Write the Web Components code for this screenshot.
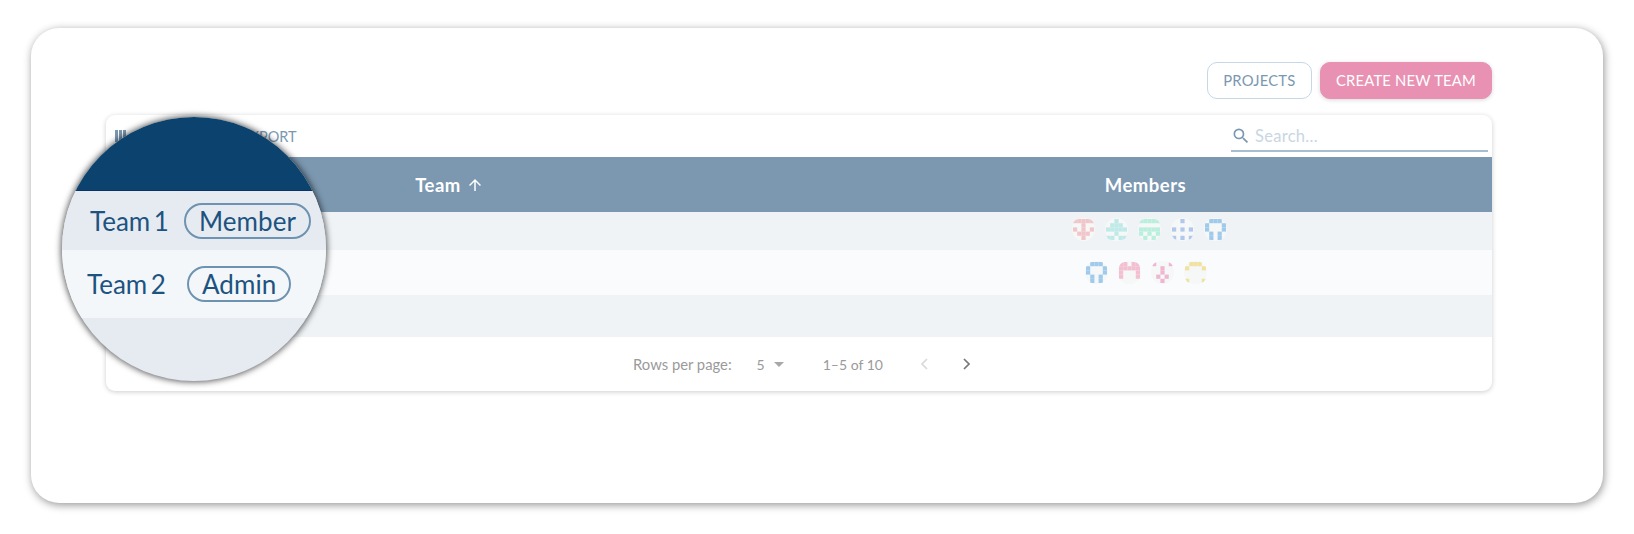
<!DOCTYPE html>
<html>
<head>
<meta charset="utf-8">
<title>Teams</title>
<style>
  html, body { margin: 0; background: #fff; }
  body { box-sizing: border-box; height: 534px; padding: 28px 31px 0; font-family: "Lato", "Liberation Sans", sans-serif; overflow: hidden; }
</style>
</head>
<body>
<team-panel>
  <div slot="actions" style="display:flex">
    <team-button>PROJECTS</team-button>
    <team-button primary>CREATE NEW TEAM</team-button>
  </div>
  <team-card>
    <team-toolbar></team-toolbar>
    <team-head></team-head>
    <team-row tone="dark" height="38" style="--shift:7px;--lift:4px">
      <team-identicon color="#f0c6cb" cells="11111 00100 10101 01110 00100"></team-identicon>
      <team-identicon color="#bfeae8" cells="00100 01110 11111 00100 11011"></team-identicon>
      <team-identicon color="#b9efdc" cells="11111 00000 11111 10101 01010"></team-identicon>
      <team-identicon color="#b0c8ee" cells="00100 00000 10101 00000 10101"></team-identicon>
      <team-identicon color="#9fcaec" cells="01110 10001 10001 01010 01010"></team-identicon>
    </team-row>
    <team-row tone="light" height="45">
      <team-identicon color="#9fcaec" cells="01110 10001 10001 01010 01010"></team-identicon>
      <team-identicon color="#f3c0d2" cells="11011 11111 10001 10001 00000"></team-identicon>
      <team-identicon color="#eeb6d0" cells="10001 00100 00100 01010 00100"></team-identicon>
      <team-identicon color="#f0e2a0" cells="01110 10001 00000 00000 10001"></team-identicon>
    </team-row>
    <team-row tone="dark" height="42"></team-row>
    <team-pagination></team-pagination>
  </team-card>
  <team-lens slot="overlay">
    <lens-row tone="mid" style="--pad:28px;--rowh:59px;--gap:15px">
      <span>Team 1</span><lens-pill>Member</lens-pill>
    </lens-row>
    <lens-row tone="pale" style="--pad:25px;--rowh:68px;--gap:21px">
      <span>Team 2</span><lens-pill>Admin</lens-pill>
    </lens-row>
  </team-lens>
</team-panel>

<script>
class TeamPanel extends HTMLElement {
    constructor() {
        super();
        this.attachShadow({mode: "open"});
        this.shadowRoot.innerHTML = `
        <style>
            :host {
                display: block;
                position: relative;
                box-sizing: border-box;
                width: 1572px;
                height: 475px;
                padding: 34px 111px 0 75px;
                background: #fff;
                border-radius: 28px;
                box-shadow: 1px 2px 8px rgba(0, 0, 0, .42);
            }
            .actions { display: flex; justify-content: flex-end; margin-bottom: 16px; }
        </style>
        <div class="actions"><slot name="actions"></slot></div>
        <slot></slot>
        <slot name="overlay"></slot>
        `;
    }
}

class TeamButton extends HTMLElement {
    constructor() {
        super();
        this.attachShadow({mode: "open"});
        this.shadowRoot.innerHTML = `
        <style>
            :host {
                display: inline-flex;
                align-items: center;
                justify-content: center;
                box-sizing: border-box;
                height: 37px;
                margin-left: 8px;
                padding: 0 15.5px 2px;
                border: 1px solid #c6d7e5;
                border-radius: 10px;
                color: #7b98b0;
                font-size: 14.8px;
                letter-spacing: .2px;
            }
            :host([primary]) {
                padding: 0 15px 2px;
                border-color: #e891b3;
                background: #e891b3;
                color: #fff;
                box-shadow: 0 1px 4px rgba(0, 0, 0, .16);
            }
        </style>
        <slot></slot>
        `;
    }
}

class TeamCard extends HTMLElement {
    constructor() {
        super();
        this.attachShadow({mode: "open"});
        this.shadowRoot.innerHTML = `
        <style>
            :host {
                display: block;
                width: 1386px;
                background: #fff;
                border-radius: 9px;
                box-shadow: 0 1px 5px rgba(0, 0, 0, .2);
                overflow: hidden;
            }
        </style>
        <slot></slot>
        `;
    }
}

class TeamToolbar extends HTMLElement {
    constructor() {
        super();
        this.attachShadow({mode: "open"});
        this.shadowRoot.innerHTML = `
        <style>
            :host {
                display: flex;
                align-items: center;
                height: 42px;
                padding: 0 4px 0 8px;
                color: #7b98b0;
                font-size: 14.5px;
            }
            svg { display: block; }
            .export { margin-left: 32px; }
            .search {
                display: flex;
                align-items: center;
                gap: 4px;
                box-sizing: border-box;
                width: 257px;
                height: 36px;
                margin: 0 0 4px auto;
                padding: 6px 0 0;
                border-bottom: 2px solid #a7bdd0;
                color: #c9d6e3;
                font-size: 16.5px;
                letter-spacing: .3px;
            }
        </style>
        <svg width="20" height="20" viewBox="0 0 20 20" fill="#7b98b0"><path d="M1 4h3v12H1zM5 4h3v12H5zM9 4h3v12H9z"/></svg>
        <span style="margin-left:4px">COLUMNS</span>
        <span class="export">EXPORT</span>
        <div class="search">
            <svg width="20" height="20" viewBox="0 0 24 24" fill="#7b98b0"><path d="M15.5 14h-.79l-.28-.27A6.47 6.47 0 0 0 16 9.5 6.5 6.5 0 1 0 9.5 16c1.61 0 3.09-.59 4.23-1.57l.27.28v.79l5 4.99L20.49 19l-4.99-5zm-6 0C7.01 14 5 11.99 5 9.5S7.01 5 9.5 5 14 7.01 14 9.5 11.99 14 9.5 14z"/></svg>
            <span>Search...</span>
        </div>
        `;
    }
}

class TeamHead extends HTMLElement {
    constructor() {
        super();
        this.attachShadow({mode: "open"});
        this.shadowRoot.innerHTML = `
        <style>
            :host {
                display: grid;
                grid-template-columns: 1fr 1fr;
                align-items: center;
                height: 55px;
                background: #7b98b0;
                color: #fff;
                font-size: 18.5px;
                font-weight: 700;
                letter-spacing: .5px;
            }
            div { display: flex; align-items: center; justify-content: center; gap: 5px; }
            .sorted { padding-right: 6px; }
            svg { display: block; }
        </style>
        <div class="sorted">Team
            <svg width="18" height="18" viewBox="0 0 24 24" fill="#fff"><path d="M4 12l1.41 1.41L11 7.83V20h2V7.83l5.58 5.59L20 12l-8-8-8 8z"/></svg>
        </div>
        <div>Members</div>
        `;
    }
}

class TeamRow extends HTMLElement {
    static get observedAttributes() {
        return ['height'];
    }

    constructor() {
        super();
        this.attachShadow({mode: "open"});
        this.shadowRoot.innerHTML = `
        <style>
            :host {
                display: grid;
                grid-template-columns: 1fr 1fr;
                background: #f9fbfc;
            }
            :host([tone="dark"]) { background: #eff3f6; }
            .members {
                display: flex;
                align-items: center;
                justify-content: center;
                padding-left: var(--shift, 0);
                padding-bottom: var(--lift, 0);
            }
        </style>
        <div></div>
        <div class="members"><slot></slot></div>
        `;
    }

    attributeChangedCallback() {
        this.style.height = this.getAttribute("height") + "px";
    }
}

class TeamIdenticon extends HTMLElement {
    constructor() {
        super();
        this.attachShadow({mode: "open"});
    }

    connectedCallback() {
        const color = this.getAttribute("color") || "#ccc";
        const rows = (this.getAttribute("cells") || "").split(" ");
        let rects = "";
        rows.forEach((row, y) => {
            [...row].forEach((on, x) => {
                if (on === "1") rects += `<rect x="${x}" y="${y}" width="1" height="1"/>`;
            });
        });
        this.shadowRoot.innerHTML = `
        <style>
            :host {
                display: flex;
                align-items: center;
                justify-content: center;
                width: 23px;
                height: 23px;
                margin: 0 5px;
                border-radius: 50%;
                background: #f6f7f7;
            }
            svg { display: block; border-radius: 6px; filter: blur(.4px); }
        </style>
        <svg width="21" height="21" viewBox="0 0 5 5" fill="${color}">${rects}</svg>
        `;
    }
}

class TeamPagination extends HTMLElement {
    constructor() {
        super();
        this.attachShadow({mode: "open"});
        this.shadowRoot.innerHTML = `
        <style>
            :host {
                display: flex;
                align-items: center;
                justify-content: center;
                height: 54px;
                padding-left: 8px;
                color: #9a9a9a;
                font-size: 14.8px;
            }
            svg { display: block; }
            .size { margin-left: 25px; font-size: 14px; }
            .caret { margin-left: 9px; width: 0; height: 0; border: 5px solid transparent; border-top-color: #a8a8a8; border-bottom: 0; }
            .range { margin-left: 39px; font-size: 14px; }
            .prev { margin-left: 34px; }
            .next { margin-left: 28px; }
        </style>
        <span>Rows per page:</span>
        <span class="size">5</span>
        <span class="caret"></span>
        <span class="range">1–5 of 10</span>
        <svg class="prev" width="14" height="14" viewBox="0 0 14 14" fill="none" stroke="#dadada" stroke-width="1.7"><path d="M10 2L5 7l5 5"/></svg>
        <svg class="next" width="14" height="14" viewBox="0 0 14 14" fill="none" stroke="#777" stroke-width="1.7"><path d="M5 2l5 5-5 5"/></svg>
        `;
    }
}

class TeamLens extends HTMLElement {
    constructor() {
        super();
        this.attachShadow({mode: "open"});
        this.shadowRoot.innerHTML = `
        <style>
            :host {
                position: absolute;
                left: 31px;
                top: 89px;
                width: 264px;
                height: 264px;
                border-radius: 50%;
                background: #e6ebf2;
                box-shadow: 0 0 6px 1px rgba(0, 0, 0, .65);
                overflow: hidden;
            }
            .top { height: 74px; background: #0b426e; border-bottom: 1px solid #0a3468; box-sizing: border-box; }
        </style>
        <div class="top"></div>
        <slot></slot>
        `;
    }
}

class LensRow extends HTMLElement {
    constructor() {
        super();
        this.attachShadow({mode: "open"});
        this.shadowRoot.innerHTML = `
        <style>
            :host {
                display: flex;
                align-items: center;
                gap: var(--gap);
                height: var(--rowh);
                padding-left: var(--pad);
                color: #1d5380;
                font-size: 26px;
                word-spacing: -3px;
                background: #e6ebf2;
            }
            :host([tone="pale"]) { background: #f4f7fa; }
        </style>
        <slot></slot>
        `;
    }
}

class LensPill extends HTMLElement {
    constructor() {
        super();
        this.attachShadow({mode: "open"});
        this.shadowRoot.innerHTML = `
        <style>
            :host {
                display: inline-flex;
                align-items: center;
                box-sizing: border-box;
                height: 36px;
                padding: 0 13px;
                border: 2px solid #6d93b1;
                border-radius: 18px;
                letter-spacing: .1px;
            }
        </style>
        <slot></slot>
        `;
    }
}

customElements.define('team-panel', TeamPanel);
customElements.define('team-button', TeamButton);
customElements.define('team-card', TeamCard);
customElements.define('team-toolbar', TeamToolbar);
customElements.define('team-head', TeamHead);
customElements.define('team-row', TeamRow);
customElements.define('team-identicon', TeamIdenticon);
customElements.define('team-pagination', TeamPagination);
customElements.define('team-lens', TeamLens);
customElements.define('lens-row', LensRow);
customElements.define('lens-pill', LensPill);
</script>
</body>
</html>
